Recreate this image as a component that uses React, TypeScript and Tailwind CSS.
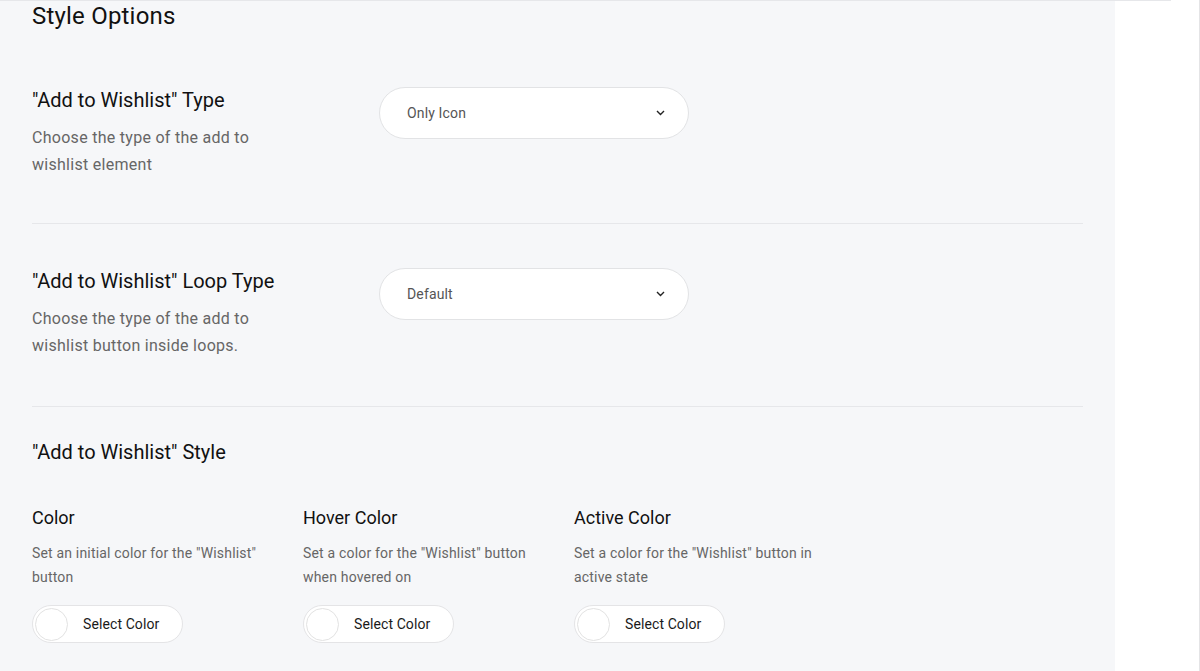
import { ReactNode } from "react"

const font = { fontFamily: "Roboto, 'Liberation Sans', sans-serif" }

function Chevron() {
  return (
    <svg width="9" height="6" viewBox="0 0 9 6" fill="none" className="text-[#222]">
      <path d="M1 1l3.5 3.5L8 1" stroke="currentColor" strokeWidth="1.4" />
    </svg>
  )
}

function SelectBox({ value }: { value: string }) {
  return (
    <div className="flex h-[52px] w-[310px] items-center justify-between rounded-full border border-[#e2e3e5] bg-white pl-[27px] pr-[23px]">
      <span className="text-[14px] tracking-[0.15px] text-[#555]">{value}</span>
      <Chevron />
    </div>
  )
}

function SettingRow({ title, desc, children }: { title: string; desc: ReactNode; children: ReactNode }) {
  return (
    <div className="flex">
      <div className="w-[347px] shrink-0">
        <div className="text-[20px] leading-[28px] text-[#111]">{title}</div>
        <div className="mt-[11px] w-[250px] text-[16px] leading-[26.5px] tracking-[0.28px] text-[#666]">{desc}</div>
      </div>
      <div className="pt-px">{children}</div>
    </div>
  )
}

function ColorPicker({ title, desc }: { title: string; desc: string }) {
  return (
    <div className="w-[271px]">
      <div className="text-[18px] leading-[26px] text-[#111]">{title}</div>
      <div className="mt-[10px] w-[250px] text-[14px] leading-[24px] tracking-[0.18px] text-[#666]">{desc}</div>
      <button
        type="button"
        className="mt-[16px] flex h-[38px] w-[151px] items-center rounded-full border border-[#e4e4e6] bg-white pl-[2px]"
      >
        <span className="h-[33px] w-[33px] rounded-full border border-[#e2e2e2] bg-white" />
        <span className="ml-[15px] text-[14px] tracking-[0.1px] text-[#1a1a1a]">Select Color</span>
      </button>
    </div>
  )
}

export default function App() {
  return (
    <div style={font} className="h-[671px] w-[1200px] overflow-hidden border-r border-[#e4e4e6] bg-white">
      <div className="h-px w-[1171px] bg-[#e6e7ea]" />
      <div className="flex">
        <main className="h-[670px] w-[1115px] bg-[#f6f7f9] px-8">
          <h2 className="text-[24px] leading-[31px] tracking-[0.2px] text-[#111]">Style Options</h2>

          <div className="mt-[54px] w-[1051px]">
            <SettingRow title={'"Add to Wishlist" Type'} desc="Choose the type of the add to wishlist element">
              <SelectBox value="Only Icon" />
            </SettingRow>
            <div className="mt-[45px] h-px bg-[#e6e7ea]" />
          </div>

          <div className="mt-[43px] w-[1051px]">
            <SettingRow title={'"Add to Wishlist" Loop Type'} desc="Choose the type of the add to wishlist button inside loops.">
              <SelectBox value="Default" />
            </SettingRow>
            <div className="mt-[47px] h-px bg-[#e6e7ea]" />
          </div>

          <div className="mt-[31px]">
            <div className="text-[20px] leading-[28px] text-[#111]">"Add to Wishlist" Style</div>
            <div className="mt-[39px] flex">
              <ColorPicker title="Color" desc={'Set an initial color for the "Wishlist" button'} />
              <ColorPicker title="Hover Color" desc={'Set a color for the "Wishlist" button when hovered on'} />
              <ColorPicker title="Active Color" desc={'Set a color for the "Wishlist" button in active state'} />
            </div>
          </div>
        </main>
      </div>
    </div>
  )
}
